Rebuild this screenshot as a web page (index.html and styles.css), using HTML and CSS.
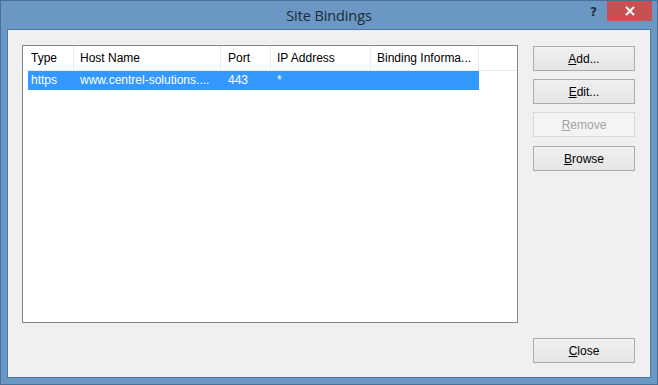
FILE: index.html
```html
<!DOCTYPE html>
<html>
<head>
<meta charset="utf-8">
<link rel="stylesheet" href="styles.css">
</head>
<body>
<div class="window">
  <div class="titlebar">
    <div></div>
    <div class="title">Site Bindings</div>
    <div class="controls">
      <span class="help">?</span>
      <span class="close-x">
        <svg width="10" height="10" viewBox="0 0 10 10"><path d="M1 1L9 9M9 1L1 9" stroke="#fff" stroke-width="2"/></svg>
      </span>
    </div>
  </div>
  <div class="client">
    <div class="list">
      <div class="header">
        <div class="col c1">Type</div>
        <div class="col c2">Host Name</div>
        <div class="col c3">Port</div>
        <div class="col c4">IP Address</div>
        <div class="col c5">Binding Informa...</div>
        <div class="col fill"></div>
      </div>
      <div class="row selected">
        <div class="cell c1">https</div>
        <div class="cell c2">www.centrel-solutions....</div>
        <div class="cell c3">443</div>
        <div class="cell c4">*</div>
        <div class="cell c5"></div>
      </div>
    </div>
    <div class="buttons">
      <button class="btn"><u>A</u>dd...</button>
      <button class="btn"><u>E</u>dit...</button>
      <button class="btn disabled"><u>R</u>emove</button>
      <button class="btn browse"><u>B</u>rowse</button>
      <div class="grow"></div>
      <button class="btn"><u>C</u>lose</button>
    </div>
  </div>
</div>
</body>
</html>
```

FILE: styles.css
```css
* { box-sizing: border-box; }
html, body { margin: 0; padding: 0; }
body {
  width: 658px;
  height: 385px;
  overflow: hidden;
  font-family: "Liberation Sans", Arial, sans-serif;
  font-size: 12px;
  color: #000;
}
.window {
  width: 658px;
  height: 385px;
  background: #6a97c3;
  border: 1px solid #4a709a;
  display: flex;
  flex-direction: column;
  padding: 0 6px 6px 6px;
}
.titlebar {
  height: 28px;
  display: grid;
  grid-template-columns: 1fr auto 1fr;
  align-items: start;
  margin: 0 -6px;
}
.title {
  font-family: "Open Sans", "Noto Sans", sans-serif;
  font-size: 14.5px;
  color: #1e2a36;
  line-height: 30px;
  letter-spacing: -0.1px;
}
.controls {
  justify-self: end;
  display: flex;
  align-items: flex-start;
  margin-right: 5px;
}
.help {
  font-family: "DejaVu Sans", sans-serif;
  font-weight: bold;
  font-size: 12px;
  color: #232d38;
  margin-right: 10px;
  line-height: 22px;
}
.close-x {
  width: 45px;
  height: 20px;
  background: #c75050;
  display: flex;
  align-items: center;
  justify-content: center;
}
.client {
  flex: 1;
  background: #f0f0f0;
  border: 1px solid #4d77a3;
  display: flex;
  padding: 15px 15px 14px 14px;
  gap: 15px;
}
.list {
  width: 496px;
  height: 278px;
  border: 1px solid #828790;
  background: #fff;
}
.header {
  display: flex;
  height: 25px;
  border-bottom: 1px solid #e5ecf6;
}
.col {
  line-height: 25px;
  border-right: 1px solid #e5ecf6;
  padding-left: 6px;
  white-space: nowrap;
  overflow: hidden;
}
.header .c1 { width: 51px; padding-left: 8px; }
.header .c2 { width: 147px; }
.header .c3 { width: 50px; padding-left: 7px; }
.header .c4 { width: 100px; }
.header .c5 { width: 108px; }
.header .fill { flex: 1; border-right: none; }
.row {
  display: flex;
  height: 19px;
  margin-left: 5px;
  width: 451px;
}
.row.selected { background: #3399ff; color: #fff; }
.cell { line-height: 19px; white-space: nowrap; overflow: hidden; padding-left: 6px; }
.row .c1 { width: 46px; padding-left: 3px; }
.row .c2 { width: 147px; }
.row .c3 { width: 50px; padding-left: 7px; }
.row .c4 { width: 100px; }
.row .c5 { width: 108px; }
.buttons {
  display: flex;
  flex-direction: column;
  gap: 8px;
  padding-top: 1px;
}
.grow { flex: 1; }
.btn {
  width: 102px;
  height: 25px;
  font-family: "Liberation Sans", Arial, sans-serif;
  font-size: 12px;
  color: #000;
  background: linear-gradient(#f0f0f0, #e5e5e5);
  border: 1px solid #acacac;
  padding: 0;
  margin: 0;
}
.btn.browse { margin-top: 1px; }
.btn.disabled {
  color: #a3a3a3;
  background: #f4f4f4;
  border-color: #d9d9d9;
}
```
